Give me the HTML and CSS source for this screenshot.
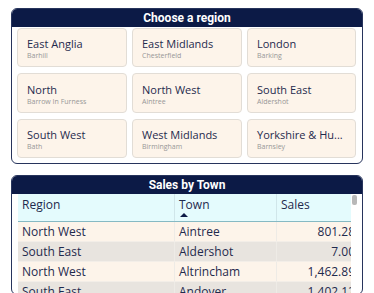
FILE: index.html
```html
<!DOCTYPE html>
<html>
<head>
<meta charset="utf-8">
<link rel="stylesheet" href="styles.css">
</head>
<body>
<div class="page">
  <section class="panel slicer">
    <div class="panel-title">Choose a region</div>
    <div class="cards">
      <div class="card"><div class="card-title">East Anglia</div><div class="card-sub">Barhill</div></div>
      <div class="card"><div class="card-title">East Midlands</div><div class="card-sub">Chesterfield</div></div>
      <div class="card"><div class="card-title">London</div><div class="card-sub">Barking</div></div>
      <div class="card"><div class="card-title">North</div><div class="card-sub">Barrow In Furness</div></div>
      <div class="card"><div class="card-title">North West</div><div class="card-sub">Aintree</div></div>
      <div class="card"><div class="card-title">South East</div><div class="card-sub">Aldershot</div></div>
      <div class="card"><div class="card-title">South West</div><div class="card-sub">Bath</div></div>
      <div class="card"><div class="card-title">West Midlands</div><div class="card-sub">Birmingham</div></div>
      <div class="card"><div class="card-title">Yorkshire &amp; Hu...</div><div class="card-sub">Barnsley</div></div>
    </div>
  </section>
  <section class="panel table-panel">
    <div class="panel-title">Sales by Town</div>
    <div class="table-body">
      <div class="table-clip">
        <div class="row head">
          <div class="cell c-region">Region</div>
          <div class="cell c-town">Town<span class="sort"></span></div>
          <div class="cell c-sales">Sales</div>
        </div>
        <div class="row odd">
          <div class="cell c-region">North West</div>
          <div class="cell c-town">Aintree</div>
          <div class="cell c-sales num">801.28</div>
        </div>
        <div class="row even">
          <div class="cell c-region">South East</div>
          <div class="cell c-town">Aldershot</div>
          <div class="cell c-sales num">7.00</div>
        </div>
        <div class="row odd">
          <div class="cell c-region">North West</div>
          <div class="cell c-town">Altrincham</div>
          <div class="cell c-sales num">1,462.89</div>
        </div>
        <div class="row even">
          <div class="cell c-region">South East</div>
          <div class="cell c-town">Andover</div>
          <div class="cell c-sales num">1,402.12</div>
        </div>
      </div>
      <div class="scrollbar"><div class="thumb"></div></div>
    </div>
  </section>
</div>
</body>
</html>
```
FILE: styles.css
```css
html, body {
  margin: 0;
  padding: 0;
  background: #ffffff;
  height: 293px;
  overflow: hidden;
}
.page {
  padding: 8px 11px 0 11px;
  display: flex;
  flex-direction: column;
  gap: 11px;
  font-family: "Open Sans", "Noto Sans", sans-serif;
  color: #1f2a4d;
}
.panel {
  border: 1px solid #27345c;
  border-radius: 6px;
  overflow: hidden;
  background: #fff;
}
.panel-title {
  background: #0c1a46;
  color: #ffffff;
  font-family: "Roboto", "Liberation Sans", sans-serif;
  font-weight: 700;
  font-size: 12px;
  line-height: 18px;
  height: 18px;
  text-align: center;
}
.cards {
  display: grid;
  grid-template-columns: 110px 110px 109px;
  grid-template-rows: 39px 40px 39px;
  column-gap: 5px;
  row-gap: 6px;
  padding: 1px 6px 5px 5px;
}
.card {
  background: #fdf4ea;
  border: 1px solid #e2ddd6;
  border-radius: 4px;
  padding: 0 9px;
  display: flex;
  flex-direction: column;
  justify-content: center;
  overflow: hidden;
}
.card-title {
  font-size: 11px;
  line-height: 14px;
  white-space: nowrap;
  margin-top: 2px;
}
.card-sub {
  font-size: 7px;
  line-height: 9px;
  color: #979797;
  white-space: nowrap;
}
.table-body {
  display: flex;
  padding-left: 6px;
  height: 100px;
}
.table-clip {
  width: 333px;
  overflow: hidden;
  flex: none;
}
.row {
  display: flex;
  width: 340px;
  height: 20px;
  font-size: 12px;
  line-height: 20px;
}
.row.head {
  height: 27px;
  background: #e4fbfd;
  border-bottom: 1px solid #86b9c3;
}
.row.odd { background: #fdf4ea; }
.row.even { background: #e8e4df; }
.row.odd, .row.even { border-bottom: 1px solid #f3eee8; height: 19px; line-height: 19px; }
.cell {
  padding: 0 4px;
  white-space: nowrap;
  position: relative;
  box-sizing: border-box;
}
.c-region { width: 157px; border-right: 1px solid #eeebe6; }
.c-town { width: 102px; border-right: 1px solid #eeebe6; }
.c-sales { width: 81px; }
.head .cell { line-height: 18px; padding-top: 2px; border-right-color: #d0e6ea; }
.num { text-align: right; padding-right: 3px; }
.sort {
  position: absolute;
  left: 5px;
  top: 19px;
  width: 0;
  height: 0;
  border-left: 4px solid transparent;
  border-right: 4px solid transparent;
  border-bottom: 4px solid #0c1a46;
}
.scrollbar {
  width: 11px;
  padding: 1px 0 0 1px;
}
.thumb {
  width: 5px;
  height: 10px;
  background: #b8b8b8;
  border-radius: 2px;
}
```
